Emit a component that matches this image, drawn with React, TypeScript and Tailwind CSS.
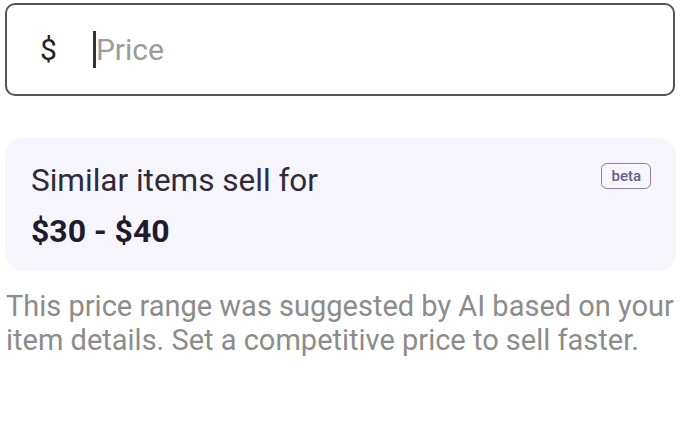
export default function App() {
  return (
    <div
      className="w-[686px] h-[440px] bg-white pl-[5px] pt-[3px]"
      style={{ fontFamily: "Roboto, 'Noto Sans', sans-serif" }}
    >
      <div className="w-[670px] h-[93px] rounded-[10px] border-2 border-[#555555] flex items-center pl-[33px]">
        <span className="text-[30px] leading-none text-[#222222]">$</span>
        <div className="ml-[36px] w-[3px] h-[37px] bg-[#333333]" />
        <span className="ml-[0px] text-[30px] leading-none text-[#9b9b9b]">Price</span>
      </div>

      <div className="mt-[42px] w-[671px] rounded-[18px] bg-[#f7f5fc] pl-[26px] pr-[25px] pt-[24px] pb-[21px]">
        <div className="flex items-start justify-between">
          <div className="text-[31.5px] leading-[38px] text-[#2e2a3c]">Similar items sell for</div>
          <div className="mt-[1px] h-[26px] px-[9px] rounded-[6px] border-[1.5px] border-[#8a80a6] flex items-center text-[15px] font-medium text-[#675c8c]">
            beta
          </div>
        </div>
        <div className="mt-[12px] text-[32px] leading-[38px] font-bold text-[#1f1b2d]">$30 - $40</div>
      </div>

      <div className="mt-[19px] pl-[1px] text-[29px] leading-[33.5px] text-[#8c8c8c] whitespace-nowrap">
        This price range was suggested by AI based on your
        <br />
        item details. Set a competitive price to sell faster.
      </div>
    </div>
  );
}
